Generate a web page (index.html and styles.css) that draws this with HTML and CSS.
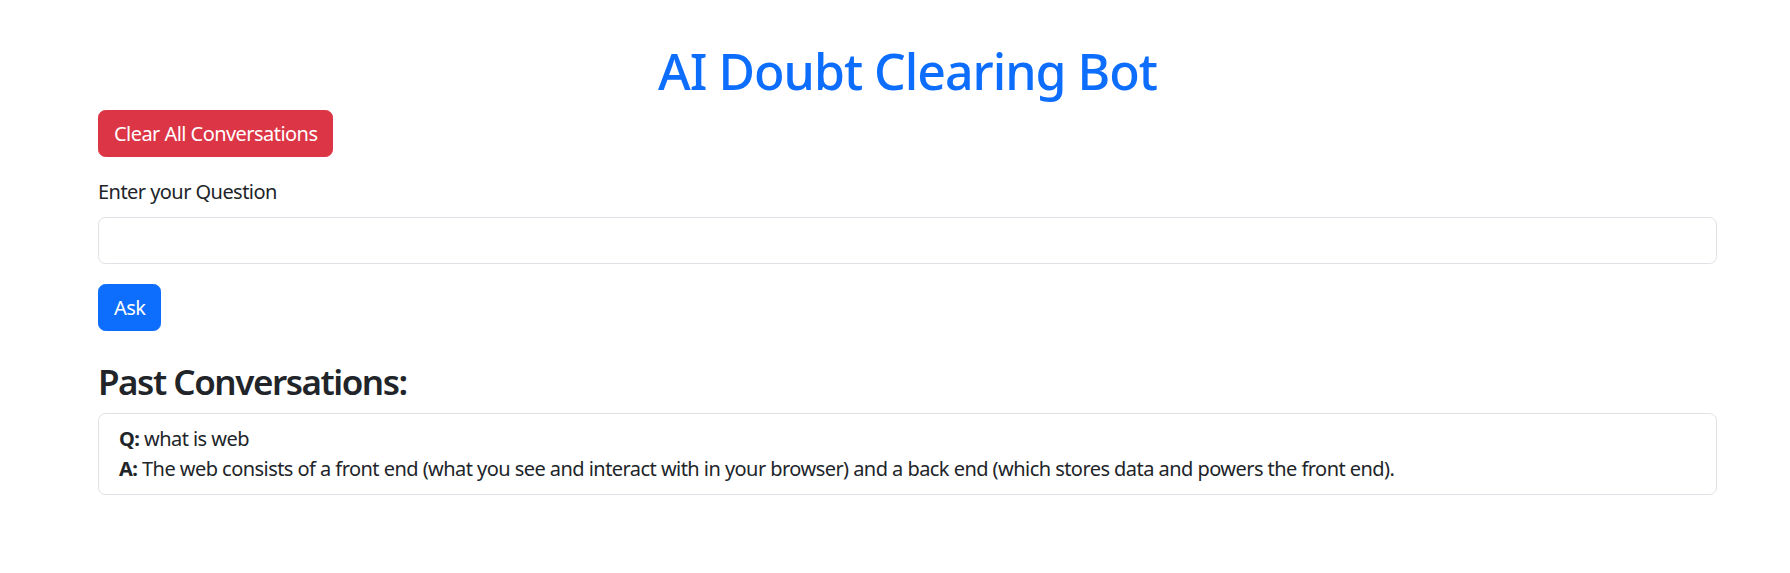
FILE: index.html
```html
<!DOCTYPE html>
<html lang="en">
<head>
<meta charset="utf-8">
<title>AI Doubt Clearing Bot</title>
<link rel="stylesheet" href="styles.css">
</head>
<body>
<div class="container">
  <h1 class="title">AI Doubt Clearing Bot</h1>
  <button class="btn btn-danger clear-btn" type="button">Clear All Conversations</button>
  <form class="ask-form">
    <label class="form-label" for="q">Enter your Question</label>
    <input class="form-control" id="q" type="text">
    <button class="btn btn-primary" type="button">Ask</button>
  </form>
  <h3 class="section-title">Past Conversations:</h3>
  <ul class="list-group">
    <li class="list-group-item">
      <div><strong>Q:</strong> what is web</div>
      <div><strong>A:</strong> The web consists of a front end (what you see and interact with in your browser) and a back end (which stores data and powers the front end).</div>
    </li>
  </ul>
</div>
</body>
</html>
```
FILE: styles.css
```css
* { box-sizing: border-box; }
html, body { margin: 0; padding: 0; background: #fff; }
body {
  font-family: "Noto Sans", "Open Sans", sans-serif;
  font-size: 20px;
  line-height: 30px;
  letter-spacing: -0.55px;
  color: #212529;
}
.container {
  width: 1619px;
  margin-left: 98px;
  padding-top: 41px;
}
.title {
  margin: 0 0 9px;
  font-size: 50px;
  line-height: 60px;
  font-weight: 500;
  letter-spacing: -1px;
  color: #0d6efd;
  text-align: center;
}
.btn {
  display: inline-block;
  font-family: inherit;
  font-size: 20px;
  line-height: 30px;
  letter-spacing: -0.55px;
  padding: 7.5px 15px;
  border: 1px solid transparent;
  border-radius: 7.5px;
  color: #fff;
  cursor: pointer;
}
.btn-danger { background: #dc3545; border-color: #dc3545; }
.btn-primary { background: #0d6efd; border-color: #0d6efd; }
.clear-btn { margin-bottom: 20px; display: block; }
.ask-form { margin: 0 0 30px; }
.form-label { display: block; margin-bottom: 10px; }
.form-control {
  display: block;
  width: 100%;
  height: 47px;
  padding: 7.5px 15px;
  font-size: 20px;
  font-family: inherit;
  border: 1px solid #dee2e6;
  border-radius: 7.5px;
  margin-bottom: 20px;
  outline: none;
}
.section-title {
  margin: 0 0 10px;
  font-size: 35px;
  line-height: 42px;
  font-weight: 600;
  letter-spacing: -1.45px;
}
.list-group {
  list-style: none;
  margin: 0;
  padding: 0;
}
.list-group-item {
  border: 1px solid #dee2e6;
  border-radius: 7.5px;
  padding: 10px 20px;
}
strong { font-weight: 700; }
```
